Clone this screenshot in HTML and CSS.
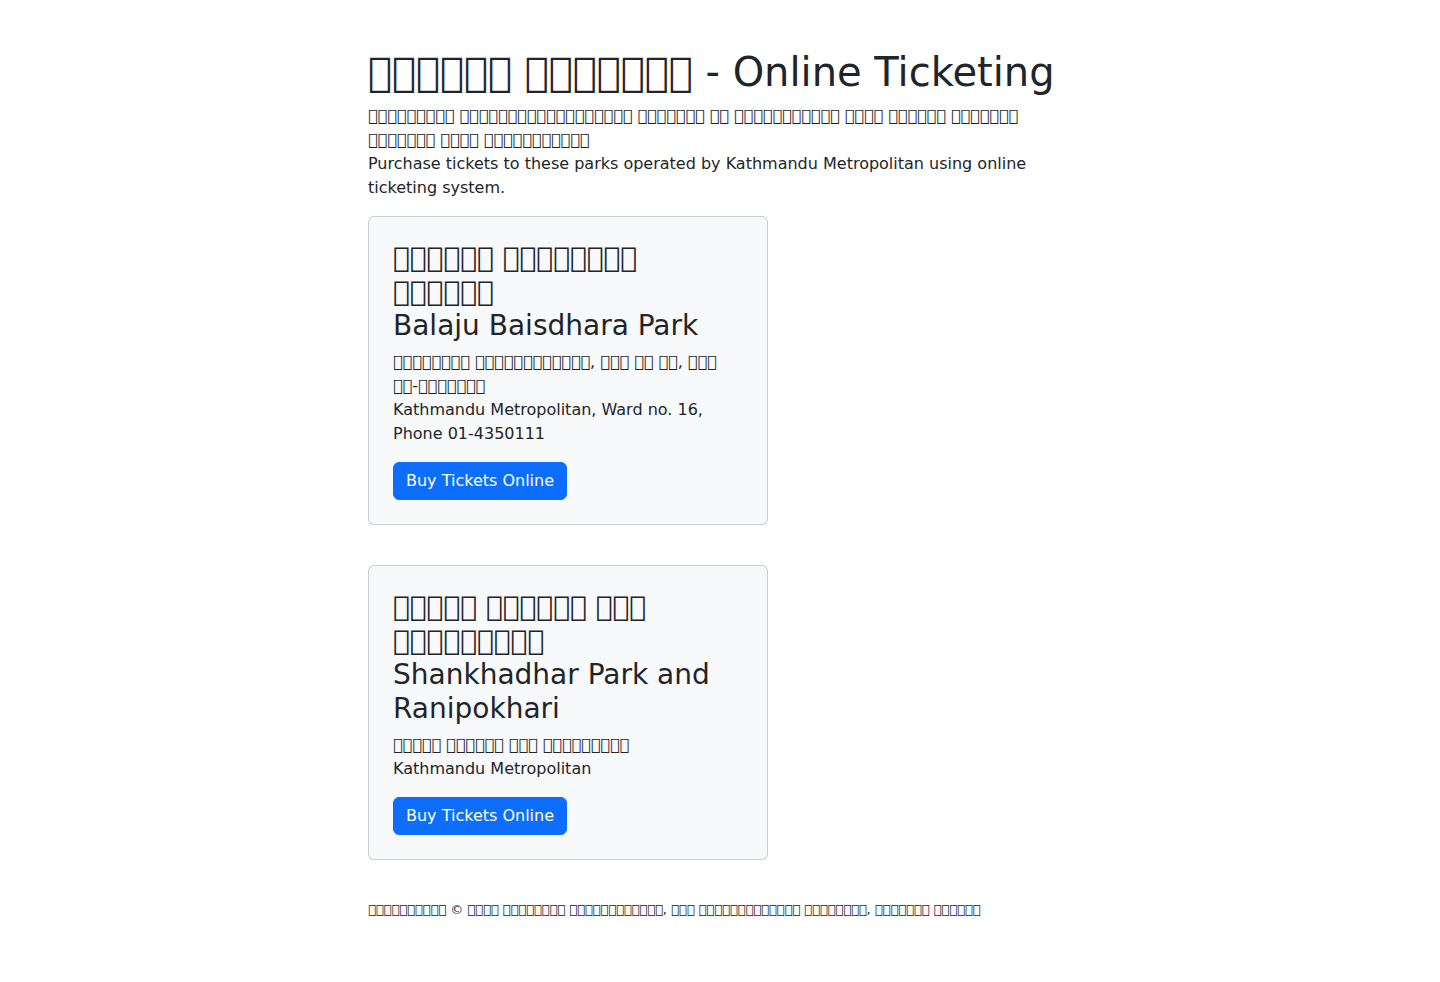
FILE: index.html
```
<!DOCTYPE html>
<html lang="ne">
<head>
  <meta charset="utf-8">
  <meta name="viewport" content="width=device-width, initial-scale=1">
  <title>Online Ticketing</title>
  <link rel="stylesheet" href="styles.css">
</head>
<body>
  <div class="container">
    <header class="intro">
      <h1 class="page-title">&#xE000;&#xE000;&#xE000;&#xE000;&#xE000;&#xE000; &#xE000;&#xE000;&#xE000;&#xE000;&#xE000;&#xE000;&#xE000; - Online Ticketing</h1>
      <p class="text">
        &#xE000;&#xE000;&#xE000;&#xE000;&#xE000;&#xE000;&#xE000;&#xE000;&#xE000;
        &#xE000;&#xE000;&#xE000;&#xE000;&#xE000;&#xE000;&#xE000;&#xE000;&#xE000;&#xE000;&#xE000;&#xE000;&#xE000;&#xE000;&#xE000;&#xE000;&#xE000;&#xE000;
        &#xE000;&#xE000;&#xE000;&#xE000;&#xE000;&#xE000;&#xE000;
        &#xE000;&#xE000;
        &#xE000;&#xE000;&#xE000;&#xE000;&#xE000;&#xE000;&#xE000;&#xE000;&#xE000;&#xE000;&#xE000;
        &#xE000;&#xE000;&#xE000;&#xE000;
        &#xE000;&#xE000;&#xE000;&#xE000;&#xE000;&#xE000;
        &#xE000;&#xE000;&#xE000;&#xE000;&#xE000;&#xE000;&#xE000;
        &#xE000;&#xE000;&#xE000;&#xE000;&#xE000;&#xE000;&#xE000;
        &#xE000;&#xE000;&#xE000;&#xE000;
        &#xE000;&#xE000;&#xE000;&#xE000;&#xE000;&#xE000;&#xE000;&#xE000;&#xE000;&#xE000;&#xE000;<br>
        Purchase tickets to these parks operated by Kathmandu Metropolitan using online ticketing system.
      </p>
    </header>

    <main class="parks">
      <article class="card">
        <h2 class="card-title">
          &#xE000;&#xE000;&#xE000;&#xE000;&#xE000;&#xE000;
          &#xE000;&#xE000;&#xE000;&#xE000;&#xE000;&#xE000;&#xE000;&#xE000;
          &#xE000;&#xE000;&#xE000;&#xE000;&#xE000;&#xE000;<br>
          Balaju Baisdhara Park
        </h2>
        <p class="text">
          &#xE000;&#xE000;&#xE000;&#xE000;&#xE000;&#xE000;&#xE000;&#xE000;
          &#xE000;&#xE000;&#xE000;&#xE000;&#xE000;&#xE000;&#xE000;&#xE000;&#xE000;&#xE000;&#xE000;&#xE000;,
          &#xE000;&#xE000;&#xE000; &#xE000;&#xE000; &#xE000;&#xE000;,
          &#xE000;&#xE000;&#xE000;
          &#xE000;&#xE000;-&#xE000;&#xE000;&#xE000;&#xE000;&#xE000;&#xE000;&#xE000;<br>
          Kathmandu Metropolitan, Ward no. 16, Phone 01-4350111
        </p>
        <a class="btn" href="#balaju">Buy Tickets Online</a>
      </article>

      <article class="card">
        <h2 class="card-title">
          &#xE000;&#xE000;&#xE000;&#xE000;&#xE000;
          &#xE000;&#xE000;&#xE000;&#xE000;&#xE000;&#xE000;
          &#xE000;&#xE000;&#xE000;
          &#xE000;&#xE000;&#xE000;&#xE000;&#xE000;&#xE000;&#xE000;&#xE000;&#xE000;<br>
          Shankhadhar Park and Ranipokhari
        </h2>
        <p class="text">
          &#xE000;&#xE000;&#xE000;&#xE000;&#xE000;
          &#xE000;&#xE000;&#xE000;&#xE000;&#xE000;&#xE000;
          &#xE000;&#xE000;&#xE000;
          &#xE000;&#xE000;&#xE000;&#xE000;&#xE000;&#xE000;&#xE000;&#xE000;&#xE000;<br>
          Kathmandu Metropolitan
        </p>
        <a class="btn" href="#shankhadhar">Buy Tickets Online</a>
      </article>
    </main>

    <footer class="footer">
      &#xE000;&#xE000;&#xE000;&#xE000;&#xE000;&#xE000;&#xE000;&#xE000;&#xE000;&#xE000; ©
      &#xE000;&#xE000;&#xE000;&#xE000;
      &#xE000;&#xE000;&#xE000;&#xE000;&#xE000;&#xE000;&#xE000;&#xE000;
      &#xE000;&#xE000;&#xE000;&#xE000;&#xE000;&#xE000;&#xE000;&#xE000;&#xE000;&#xE000;&#xE000;&#xE000;,
      &#xE000;&#xE000;&#xE000;
      &#xE000;&#xE000;&#xE000;&#xE000;&#xE000;&#xE000;&#xE000;&#xE000;&#xE000;&#xE000;&#xE000;&#xE000;&#xE000;
      &#xE000;&#xE000;&#xE000;&#xE000;&#xE000;&#xE000;&#xE000;&#xE000;,
      &#xE000;&#xE000;&#xE000;&#xE000;&#xE000;&#xE000;&#xE000;
      &#xE000;&#xE000;&#xE000;&#xE000;&#xE000;&#xE000;
    </footer>
  </div>
</body>
</html>
```
FILE: styles.css
```
*,
*::before,
*::after {
  box-sizing: border-box;
}

body {
  margin: 0;
  background: #fff;
  color: #212529;
  font-family: "DejaVu Sans", sans-serif;
  font-size: 16px;
  line-height: 24px;
}

.container {
  max-width: 736px;
  margin: 0 auto;
  padding: 48px 16px;
}

.page-title {
  margin: 0 0 8px;
  font-size: 40px;
  font-weight: 500;
  line-height: 48px;
}

.text {
  margin: 0 0 16px;
}

.parks {
  display: flex;
  flex-direction: column;
  align-items: flex-start;
  gap: 40px;
}

.card {
  width: 100%;
  max-width: 400px;
  padding: 24px;
  border: 1px solid rgba(0, 0, 0, 0.175);
  border-radius: 6px;
  background: #f8f9fa;
}

.card-title {
  margin: 0 0 7px;
  font-size: 28px;
  font-weight: 500;
  line-height: 34px;
}

.btn {
  display: block;
  width: fit-content;
  padding: 6px 12px;
  border: 1px solid #0d6efd;
  border-radius: 6px;
  background: #0d6efd;
  color: #fff;
  text-decoration: none;
}

.btn:hover {
  background: #0b5ed7;
  border-color: #0a58ca;
}

.footer {
  margin-top: 40px;
  font-size: 13px;
  line-height: 20px;
}
```
